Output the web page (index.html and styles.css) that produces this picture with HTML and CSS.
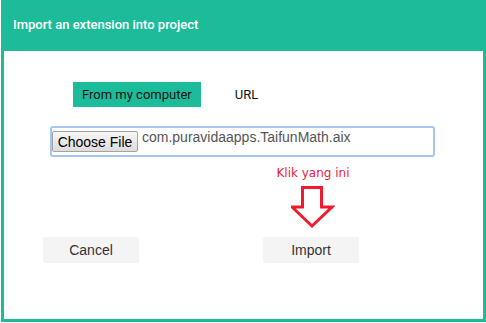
FILE: index.html
```html
<html>
  <head>
    <link rel="stylesheet" href="styles.css">
  </head>
  <body class="body">

    <div class="Dialog">
      <div class="Dialog-header">Import an extension into project</div>
      <div class="Dialog-body">
        <div class="Tabs">
          <a href="#" class="Tabs-item is-active">From my computer</a>
          <a href="#" class="Tabs-item">URL</a>
        </div>

        <div class="FilePicker">
          <button class="FilePicker-btn">Choose File</button>
          <span class="FilePicker-name">com.puravidaapps.TaifunMath.aix</span>
        </div>

        <div class="Hint">
          <span class="Hint-text">Klik yang ini</span>
          <svg class="Hint-arrow" width="44" height="44" viewBox="0 0 44 44">
            <path d="M11.5 2.5 H30.5 V22 H41 L21 41 L1 22 H11.5 Z" fill="none" stroke="#ee1c2e" stroke-width="3"/>
          </svg>
        </div>

        <div class="Actions">
          <button class="Actions-btn">Cancel</button>
          <button class="Actions-btn">Import</button>
        </div>
      </div>
    </div>

  </body>
</html>
```

FILE: styles.css
```css
html, body {
  padding: 0;
  margin: 0;
  font-family: Roboto, Helvetica, Arial, sans-serif;
  background: #fff;
}
button {
  cursor: pointer;
}

.Dialog {
  box-sizing: border-box;
  width: 485px;
  height: 322px;
  margin-left: 1px;
  border: 3px solid #1cbc9a;
  border-top: 0;
}
.Dialog-header {
  display: flex;
  align-items: center;
  height: 51px;
  padding: 0 0 3px 9px;
  box-sizing: border-box;
  background: #1cbc9a;
  color: #fff;
  font-size: 13px;
  font-weight: 500;
}
.Dialog-body {
  padding-top: 31px;
}

.Tabs {
  display: flex;
  gap: 25px;
  margin-left: 69px;
}
.Tabs-item {
  padding: 0 9px;
  line-height: 25px;
  font-size: 13px;
  color: #111;
  text-decoration: none;
}
.Tabs-item.is-active {
  background: #1cbc9a;
}

.FilePicker {
  box-sizing: border-box;
  display: flex;
  align-items: flex-start;
  width: 385px;
  height: 31px;
  margin: 19px 0 0 46px;
  padding-top: 3px;
  border: 2px solid #a5c5f3;
  border-radius: 3px;
}
.FilePicker-btn {
  width: 86px;
  height: 21px;
  padding: 0;
  border: 1px solid #a3a3a3;
  border-radius: 2px;
  background: linear-gradient(#f7f7f7, #dddddd);
  color: #000;
  font-family: "Liberation Sans", Arial, sans-serif;
  font-size: 14px;
}
.FilePicker-name {
  margin: -2px 0 0 4px;
  line-height: 16px;
  color: #555;
  font-family: "Liberation Sans", Arial, sans-serif;
  font-size: 14px;
}

.Hint {
  display: flex;
  flex-direction: column;
  align-items: center;
  width: 80px;
  margin: 9px 0 0 269px;
}
.Hint-text {
  line-height: 15px;
  color: #ee1c3a;
  font-family: "DejaVu Sans", sans-serif;
  font-size: 12px;
}
.Hint-arrow {
  display: block;
  margin-top: 4px;
}

.Actions {
  display: flex;
  gap: 124px;
  margin: 8px 0 0 39px;
}
.Actions-btn {
  width: 96px;
  height: 25px;
  padding: 0;
  border: none;
  border-radius: 2px;
  background: #f4f4f4;
  box-shadow: 0 1px 1px rgba(0, 0, 0, 0.06);
  color: #333;
  font-family: "Liberation Sans", Arial, sans-serif;
  font-size: 14px;
}
```
